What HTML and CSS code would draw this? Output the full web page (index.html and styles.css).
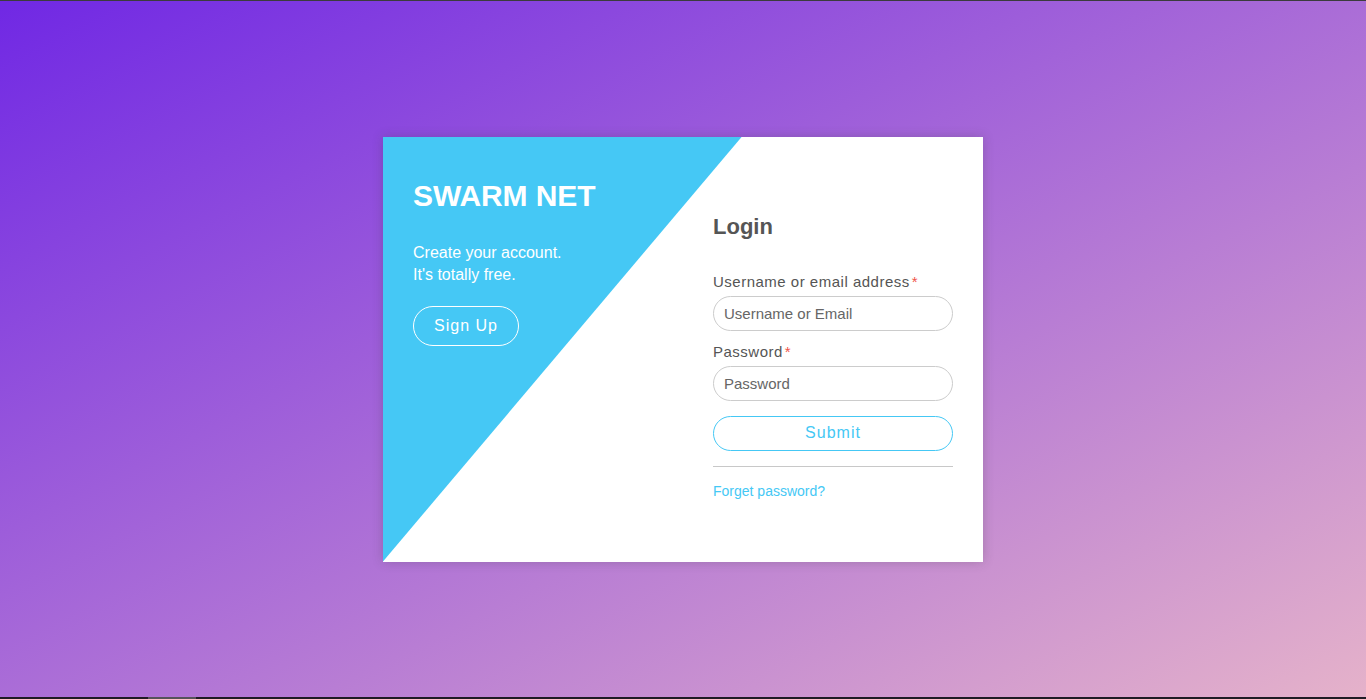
FILE: index.html
```html
<!DOCTYPE html>
<html lang="en">
<head>
<meta charset="utf-8">
<title>SWARM NET - Login</title>
<link rel="stylesheet" href="styles.css">
</head>
<body>
<div class="topbar"></div>
<main class="stage">
  <div class="card">
    <section class="promo">
      <h1 class="brand">SWARM NET</h1>
      <p class="tagline">Create your account.<br>It's totally free.</p>
      <button class="btn-signup" type="button">Sign Up</button>
    </section>
    <section class="login">
      <h2 class="login-title">Login</h2>
      <form class="form">
        <label class="label" for="user">Username or email address<span class="req">*</span></label>
        <input class="input" id="user" type="text" placeholder="Username or Email">
        <label class="label label-pw" for="pw">Password<span class="req">*</span></label>
        <input class="input" id="pw" type="password" placeholder="Password">
        <button class="btn-submit" type="button">Submit</button>
        <hr class="divider">
        <a class="forgot" href="#">Forget password?</a>
      </form>
    </section>
  </div>
</main>
<div class="bottombar"><div class="thumb"></div></div>
</body>
</html>
```

FILE: styles.css
```css
* { box-sizing: border-box; }
html, body { margin: 0; padding: 0; height: 100%; }
body {
  display: flex;
  flex-direction: column;
  font-family: "Liberation Sans", Arial, sans-serif;
  overflow: hidden;
}
.topbar { height: 1px; background: #3b3b3d; flex: none; }
.bottombar { height: 2px; background: #1f1b24; flex: none; display: flex; }
.thumb { width: 48px; margin-left: 148px; background: #56535a; }
.stage {
  flex: 1;
  display: flex;
  align-items: center;
  justify-content: center;
  background: linear-gradient(to right bottom, #7028e4, #e5b2ca);
}
.card {
  position: relative;
  width: 600px;
  height: 425px;
  background: #fff;
  display: flex;
  box-shadow: 0 0 10px rgba(60, 60, 60, 0.25);
}
.card::before {
  content: "";
  position: absolute;
  inset: 0;
  background: #45c8f5;
  clip-path: polygon(0 0, 359px 0, 0 100%);
}
.promo {
  position: relative;
  flex: 1;
  padding: 41px 30px 0 30px;
  color: #fff;
}
.brand {
  margin: 0;
  font-size: 30px;
  line-height: 36px;
  font-weight: bold;
  letter-spacing: -0.1px;
}
.tagline {
  margin: 28px 0 0;
  font-size: 16px;
  line-height: 22px;
}
.btn-signup {
  margin-top: 20px;
  height: 40px;
  padding: 0 20px;
  border: 1px solid #fff;
  border-radius: 20px;
  background: transparent;
  color: #fff;
  font-family: inherit;
  font-size: 16px;
  letter-spacing: 1px;
}
.login {
  position: relative;
  width: 270px;
  padding: 77px 30px 0 0;
}
.login-title {
  margin: 0;
  font-size: 22px;
  line-height: 26px;
  font-weight: bold;
  color: #555;
}
.form {
  display: flex;
  flex-direction: column;
  margin-top: 32px;
}
.label {
  font-size: 15px;
  line-height: 20px;
  letter-spacing: 0.5px;
  color: #555;
}
.label-pw { margin-top: 11px; }
.req { color: #f0554a; margin-left: 2px; }
.input {
  margin-top: 4px;
  height: 35px;
  border: 1px solid #ccc;
  border-radius: 18px;
  padding: 0 10px;
  font-family: inherit;
  font-size: 15px;
  color: #555;
  outline: none;
}
.input::placeholder { color: #666; }
.btn-submit {
  margin-top: 15px;
  height: 35px;
  border: 1px solid #45c8f5;
  border-radius: 18px;
  background: #fff;
  color: #45c8f5;
  font-family: inherit;
  font-size: 16px;
  letter-spacing: 1px;
}
.divider {
  margin: 15px 0 0;
  border: 0;
  border-top: 1px solid #c8c8c8;
  height: 0;
}
.forgot {
  margin-top: 15px;
  font-size: 14px;
  line-height: 18px;
  color: #45c8f5;
  text-decoration: none;
}
```
